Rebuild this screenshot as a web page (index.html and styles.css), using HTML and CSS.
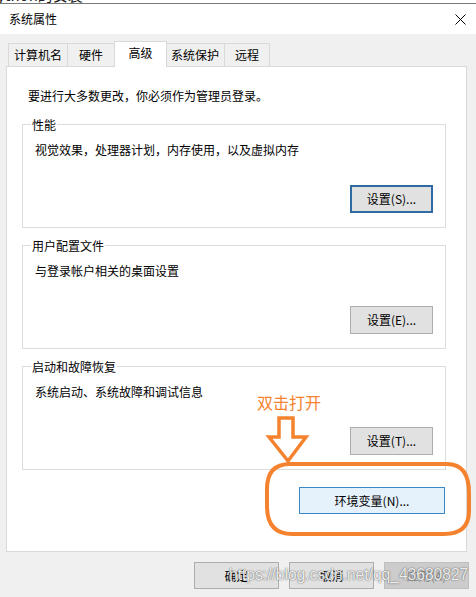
FILE: index.html
```html
<!DOCTYPE html>
<html lang="zh-CN">
<head>
<meta charset="utf-8">
<title>系统属性</title>
<link rel="stylesheet" href="styles.css">
</head>
<body>
<div class="page">
  <div class="topstrip"><span class="topstrip-text">ython的安装</span></div>
  <div class="window">
    <div class="titlebar">
      <span class="title">系统属性</span>
      <svg class="close" width="11" height="11" viewBox="0 0 11 11"><path d="M0.5 0.5 L10.5 10.5 M10.5 0.5 L0.5 10.5" stroke="#000" stroke-width="1" fill="none"/></svg>
    </div>
    <div class="client">
      <div class="tabs">
        <div class="tab tab-w60">计算机名</div>
        <div class="tab tab-w48">硬件</div>
        <div class="tab tab-selected">高级</div>
        <div class="tab tab-w60 tab-after-selected">系统保护</div>
        <div class="tab tab-w46">远程</div>
      </div>
      <div class="panel">
        <p class="intro">要进行大多数更改，你必须作为管理员登录。</p>
        <div class="group group-first">
          <div class="group-label">性能</div>
          <p class="group-desc">视觉效果，处理器计划，内存使用，以及虚拟内存</p>
          <div class="group-actions"><button class="btn btn-default">设置(S)...</button></div>
        </div>
        <div class="group">
          <div class="group-label">用户配置文件</div>
          <p class="group-desc">与登录帐户相关的桌面设置</p>
          <div class="group-actions"><button class="btn">设置(E)...</button></div>
        </div>
        <div class="group">
          <div class="group-label">启动和故障恢复</div>
          <p class="group-desc">系统启动、系统故障和调试信息</p>
          <div class="group-actions"><button class="btn">设置(T)...</button></div>
        </div>
        <div class="env-row"><button class="btn btn-env">环境变量(N)...</button></div>
      </div>
      <div class="footer">
        <button class="btn btn-footer">确定</button>
        <button class="btn btn-footer">取消</button>
        <button class="btn btn-footer btn-disabled">应用(A)</button>
      </div>
    </div>
  </div>

  <div class="note">双击打开</div>
  <svg class="annot" width="476" height="597" viewBox="0 0 476 597">
    <path d="M279 418 L293 418 L293 437 L306 437 L288 461 L269 437 L279 437 Z" fill="none" stroke="#f5822e" stroke-width="3.5" stroke-linejoin="miter"/>
    <path d="M290 464 L447 464 C463 464 469 476 469 493 L469 511 C469 527 460 534 444 534 L292 534 C275 534 267 524 267 506 L267 489 C267 472 275 464 290 464 Z" fill="none" stroke="#f5822e" stroke-width="4"/>
  </svg>
  <div class="watermark">https://blog.csdn.net/qq_43680827</div>
</div>
</body>
</html>
```

FILE: styles.css
```css
* {
  box-sizing: border-box;
}

html, body {
  margin: 0;
  padding: 0;
  background: #ffffff;
}

body {
  font-family: "Noto Sans CJK SC", "Noto Sans", sans-serif;
  font-size: 12px;
  color: #000;
}

.page {
  position: relative;
  width: 476px;
  height: 597px;
  overflow: hidden;
  background: #f0f0f0;
}

.topstrip {
  height: 3px;
  overflow: hidden;
  background: #ffffff;
}

.topstrip-text {
  display: block;
  margin-top: -13px;
  margin-left: -3px;
  font-size: 15px;
  line-height: 16px;
  color: #222;
}

.window {
  border-top: 1px solid #7a7a7a;
}

.titlebar {
  height: 30px;
  background: #ffffff;
  display: flex;
  align-items: center;
  justify-content: space-between;
  padding: 0 10px 0 9px;
}

.title {
  font-size: 12px;
  line-height: 16px;
}

.close {
  display: block;
  margin-top: 1px;
}

.client {
  padding: 7px 7px 0 6px;
}

.tabs {
  display: flex;
  align-items: flex-end;
  height: 26px;
  margin-bottom: -1px;
  padding-left: 2px;
}

.tab {
  height: 23px;
  margin-bottom: 1px;
  margin-left: -1px;
  border: 1px solid #d9d9d9;
  border-bottom: none;
  background: #f0f0f0;
  text-align: center;
  line-height: 16px;
  padding-top: 3px;
  white-space: nowrap;
}

.tab:first-child {
  margin-left: 0;
}

.tab-w60 { width: 60px; }
.tab-w48 { width: 48px; }
.tab-w46 { width: 46px; }

.tab-selected {
  position: relative;
  z-index: 1;
  width: 53px;
  height: 26px;
  margin-bottom: 0;
  background: #ffffff;
}

.tab-after-selected {
  margin-left: -2px;
}

.panel {
  width: 461px;
  height: 486px;
  background: #ffffff;
  border: 1px solid #d9d9d9;
  padding: 21px 20px 0 15px;
}

.intro {
  margin: 0 0 0 6px;
  line-height: 16px;
}

.group {
  border: 1px solid #dcdcdc;
  margin-top: 17px;
  padding: 0 12px 14px 12px;
}

.group-first {
  margin-top: 20px;
}

.group-label {
  width: fit-content;
  margin: -8px 0 0 -4px;
  padding: 0 1px;
  background: #ffffff;
  line-height: 16px;
}

.group-desc {
  margin: 9px 0 0 0;
  line-height: 16px;
}

.group-actions {
  display: flex;
  justify-content: flex-end;
  margin-top: 27px;
}

.btn {
  font-family: "Noto Sans CJK SC", "Noto Sans", sans-serif;
  font-size: 12px;
  line-height: 16px;
  color: #000;
  background: #e1e1e1;
  border: 1px solid #adadad;
  width: 83px;
  height: 28px;
  padding: 0;
  margin: 0;
  display: flex;
  align-items: center;
  justify-content: center;
}

.btn-default {
  border: 2px solid #2f6ba3;
}

.env-row {
  display: flex;
  justify-content: flex-end;
  margin-top: 17px;
  padding-right: 1px;
}

.btn-env {
  width: 146px;
  height: 27px;
  background: #e5f1fb;
  border-color: #3a86c6;
}

.footer {
  display: flex;
  justify-content: flex-end;
  gap: 10px;
  margin-top: 10px;
  margin-right: 0;
}

.btn-footer {
  width: 85px;
  height: 27px;
}

.btn-disabled {
  background: #cccccc;
  border-color: #bfbfbf;
  color: #8a8a8a;
}

.note {
  position: absolute;
  left: 257px;
  top: 392px;
  font-size: 16px;
  line-height: 20px;
  color: #f5822e;
  white-space: nowrap;
}

.annot {
  position: absolute;
  left: 0;
  top: 0;
  pointer-events: none;
}

.watermark {
  position: absolute;
  left: 229px;
  top: 566px;
  font-family: "Liberation Sans", Arial, sans-serif;
  font-size: 15.6px;
  line-height: 18px;
  color: rgba(255, 255, 255, 0.9);
  text-shadow: 0 0 1px rgba(60, 60, 60, 0.8), 0 0 2px rgba(90, 90, 90, 0.5);
  white-space: nowrap;
}
```
